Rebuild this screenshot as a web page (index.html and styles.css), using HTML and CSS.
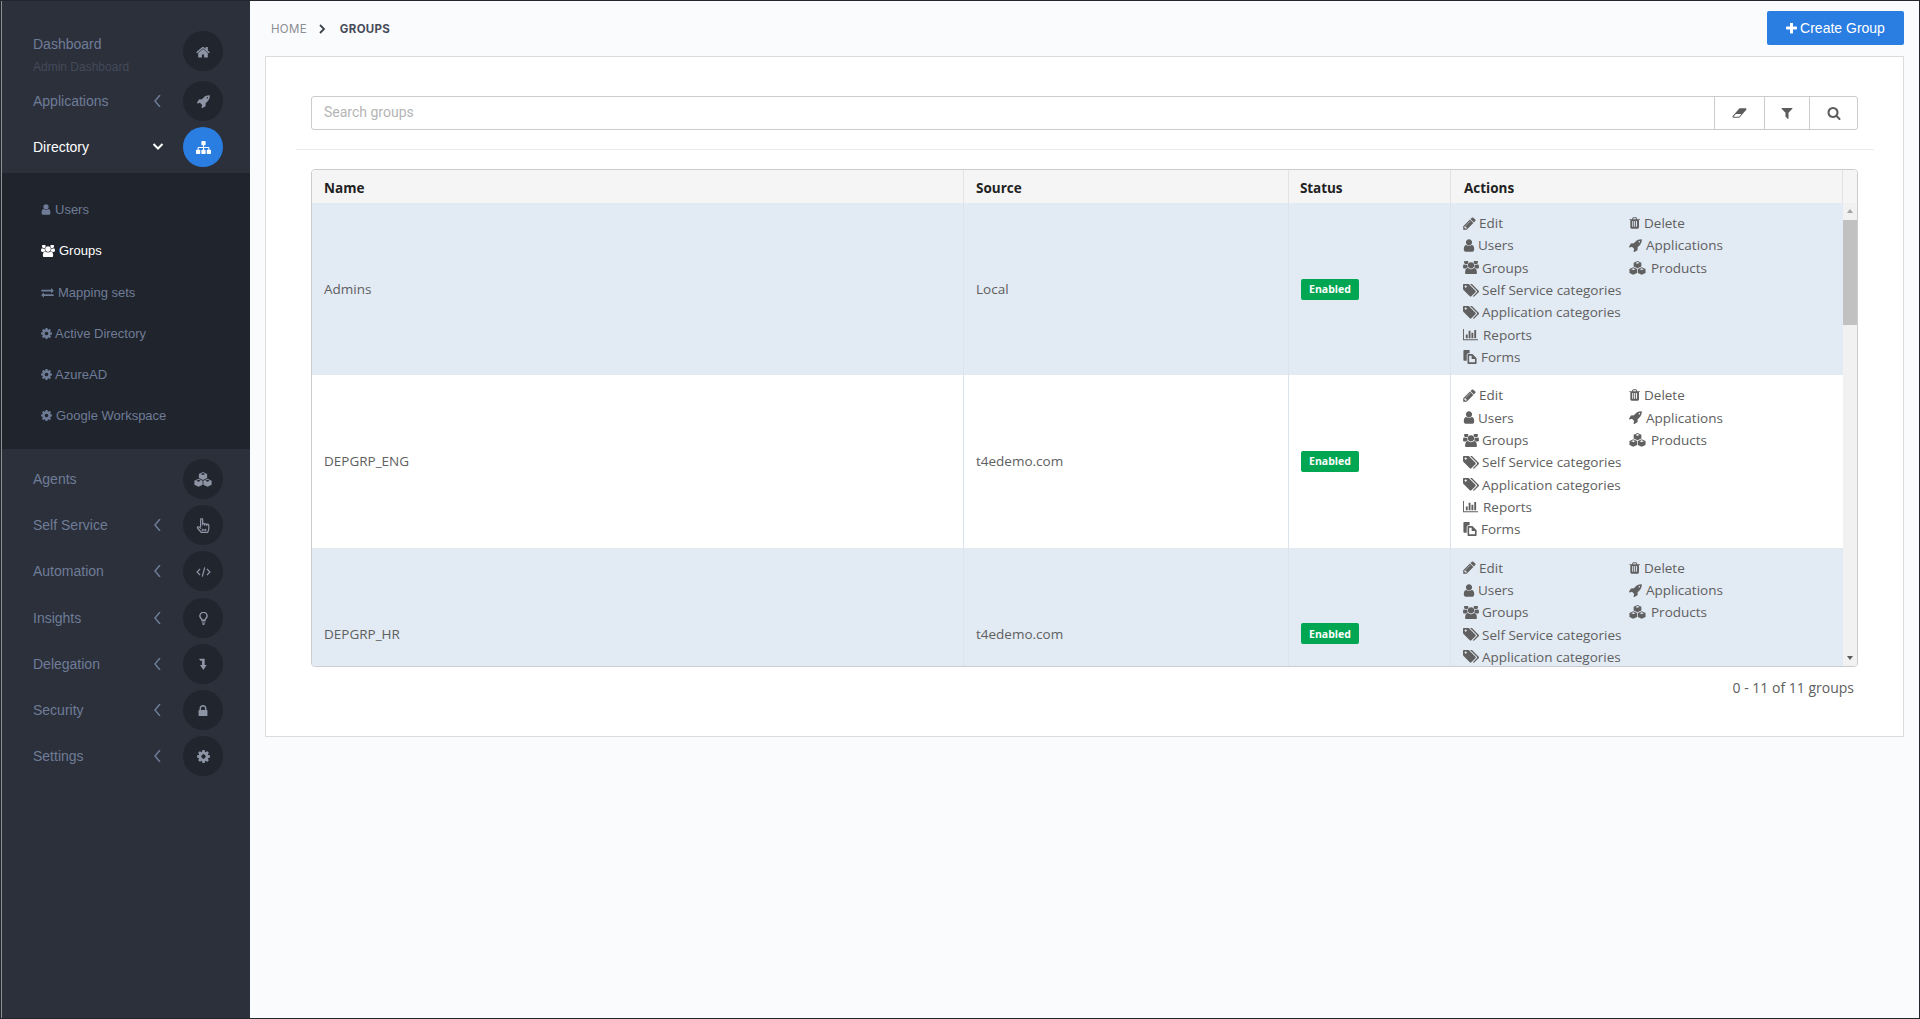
FILE: index.html
```html
<!DOCTYPE html>
<html lang="en">
<head>
<meta charset="utf-8">
<title>Groups</title>
<link rel="stylesheet" href="styles.css">
</head>
<body>
<svg class="defs" aria-hidden="true">
  <symbol id="i-home" viewBox="60 190 1672 1350"><path d="M1472 992v480q0 26-19 45t-45 19h-384v-384h-256v384h-384q-26 0-45-19t-19-45v-480q0-1 .5-3t.5-3l575-474 575 474q1 2 1 6zm223-69l-62 74q-8 9-21 11h-3q-13 0-21-7l-692-577-692 577q-12 8-24 7-13-2-21-11l-62-74q-8-10-7-23.5t11-21.5l719-599q32-26 76-26t76 26l244 204v-195q0-14 9-23t23-9h192q14 0 23 9t9 23v408l219 182q10 8 11 21.5t-7 23.5z"/></symbol>
  <symbol id="i-user" viewBox="200 100 1392 1600"><path d="M1536 1399q0 109-62.5 187t-150.5 78h-854q-88 0-150.5-78t-62.5-187q0-85 8.5-160.5t31.5-152 58.5-131 94-89 134.5-34.5q131 128 313 128t313-128q76 0 134.5 34.5t94 89 58.5 131 31.5 152 8.5 160.5zm-256-887q0 159-112.5 271.5t-271.5 112.5-271.5-112.5-112.5-271.5 112.5-271.5 271.5-112.5 271.5 112.5 112.5 271.5z"/></symbol>
  <symbol id="i-search" viewBox="0 0 1792 1792"><path d="M1216 832q0-185-131.5-316.5t-316.5-131.5-316.5 131.5-131.5 316.5 131.5 316.5 316.5 131.5 316.5-131.5 131.5-316.5zm512 832q0 52-38 90t-90 38q-54 0-90-38l-343-342q-179 124-399 124-143 0-273.5-55.5t-225-150-150-225-55.5-273.5 55.5-273.5 150-225 225-150 273.5-55.5 273.5 55.5 225 150 150 225 55.5 273.5q0 220-124 399l343 343q37 37 37 90z"/></symbol>
  <symbol id="i-filter" viewBox="0 0 1792 1792"><path d="M1595 295q17 41-14 70l-493 493v742q0 42-39 59-13 5-25 5-27 0-45-19l-256-256q-19-19-19-45v-486l-493-493q-31-29-14-70 17-39 59-39h1280q42 0 59 39z"/></symbol>
  <symbol id="i-lock" viewBox="250 130 1292 1410"><path d="M640 768h512v-192q0-106-75-181t-181-75-181 75-75 181v192zm832 96v576q0 40-28 68t-68 28h-960q-40 0-68-28t-28-68v-576q0-40 28-68t68-28h32v-192q0-184 132-316t316-132 316 132 132 316v192h32q40 0 68 28t28 68z"/></symbol>
  <symbol id="i-cog" viewBox="120 120 1552 1552"><path d="M1152 896q0-106-75-181t-181-75-181 75-75 181 75 181 181 75 181-75 75-181zm512-109v222q0 12-8 23t-20 13l-185 28q-19 54-39 91 35 50 107 138 10 12 10 25t-9 23q-27 37-99 108t-94 71q-12 0-26-9l-138-108q-44 23-91 38-16 136-29 186-7 28-36 28h-222q-14 0-24.5-8.5t-11.5-21.5l-28-184q-49-16-90-37l-141 107q-10 9-25 9-14 0-25-11-126-114-165-168-7-10-7-23 0-12 8-23 15-21 51-66.5t54-70.5q-27-50-41-99l-183-27q-13-2-21-12.5t-8-23.5v-222q0-12 8-23t19-13l186-28q14-46 39-92-40-57-107-138-10-12-10-24 0-10 9-23 26-36 98.5-107.5t94.5-71.5q13 0 26 10l138 107q44-23 91-38 16-136 29-186 7-28 36-28h222q14 0 24.5 8.5t11.5 21.5l28 184q49 16 90 37l142-107q9-9 24-9 13 0 25 10 129 119 165 170 7 8 7 22 0 12-8 23-15 21-51 66.5t-54 70.5q26 50 41 98l183 28q13 2 21 12.5t8 23.5z"/></symbol>
  <symbol id="i-plus" viewBox="190 190 1410 1410"><path d="M1600 736v192q0 40-28 68t-68 28h-416v416q0 40-28 68t-68 28h-192q-40 0-68-28t-28-68v-416h-416q-40 0-68-28t-28-68v-192q0-40 28-68t68-28h416v-416q0-40 28-68t68-28h192q40 0 68 28t28 68v416h416q40 0 68 28t28 68z"/></symbol>
  <symbol id="i-pencil" viewBox="100 100 1600 1600"><path d="M491 1536l91-91-235-235-91 91v107h128v128h107zm523-928q0-22-22-22-10 0-17 7l-542 542q-7 7-7 17 0 22 22 22 10 0 17-7l542-542q7-7 7-17zm-54-192l416 416-832 832h-416v-416zm683 96q0 53-37 90l-166 166-416-416 166-165q36-38 90-38 53 0 91 38l235 234q37 39 37 91z"/></symbol>
  <symbol id="i-trash" viewBox="150 100 1450 1600"><path d="M704 1376v-704q0-14-9-23t-23-9h-64q-14 0-23 9t-9 23v704q0 14 9 23t23 9h64q14 0 23-9t9-23zm256 0v-704q0-14-9-23t-23-9h-64q-14 0-23 9t-9 23v704q0 14 9 23t23 9h64q14 0 23-9t9-23zm256 0v-704q0-14-9-23t-23-9h-64q-14 0-23 9t-9 23v704q0 14 9 23t23 9h64q14 0 23-9t9-23zm-544-992h448l-48-117q-7-9-17-11h-317q-10 2-17 11zm928 32v64q0 14-9 23t-23 9h-96v948q0 83-47 143.5t-113 60.5h-832q-66 0-113-58.5t-47-141.5v-952h-96q-14 0-23-9t-9-23v-64q0-14 9-23t23-9h309l70-167q15-37 54-63t79-26h320q40 0 79 26t54 63l70 167h309q14 0 23 9t9 23z"/></symbol>
  <symbol id="i-rocket" viewBox="100 100 1650 1650"><path d="M1504 448q0-40-28-68t-68-28-68 28-28 68 28 68 68 28 68-28 28-68zm224-288q0 249-75.5 430.5t-253.5 360.5q-81 80-195 176l-20 379q-2 16-16 26l-384 224q-7 4-16 4-12 0-23-9l-64-64q-13-14-8-32l85-276-281-281-276 85q-3 1-9 1-14 0-23-9l-64-64q-17-19-5-39l224-384q10-14 26-16l379-20q96-114 176-195 188-187 358-258t431-71q14 0 23.5 9t9.5 22z"/></symbol>
  <symbol id="i-users" viewBox="0 150 1920 1500"><path d="M593 896q-162 5-265 128h-134q-82 0-138-40.5t-56-118.5q0-353 124-353 6 0 43.5 21t97.5 42.5 119 21.5q67 0 133-23-5 37-5 66 0 139 81 256zm1071 637q0 120-73 189.5t-194 69.5h-874q-121 0-194-69.5t-73-189.5q0-53 3.5-103.5t14-109 26.5-108.5 43-97.5 62-81 85.5-53.5 111.5-20q10 0 43 21.5t73 48 107 48 135 21.5 135-21.5 107-48 73-48 43-21.5q61 0 111.5 20t85.5 53.5 62 81 43 97.5 26.5 108.5 14 109 3.5 103.5zm-1024-1277q0 106-75 181t-181 75-181-75-75-181 75-181 181-75 181 75 75 181zm704 384q0 159-112.5 271.5t-271.5 112.5-271.5-112.5-112.5-271.5 112.5-271.5 271.5-112.5 271.5 112.5 112.5 271.5zm576 225q0 78-56 118.5t-138 40.5h-134q-103-123-265-128 81-117 81-256 0-29-5-66 66 23 133 23 59 0 119-21.5t97.5-42.5 43.5-21q124 0 124 353zm-128-609q0 106-75 181t-181 75-181-75-75-181 75-181 181-75 181 75 75 181z"/></symbol>
  <symbol id="i-exchange" viewBox="0 100 1792 1592"><path d="M1792 1184v192q0 13-9.5 22.5t-22.5 9.5h-1376v192q0 13-9.5 22.5t-22.5 9.5q-12 0-24-10l-319-320q-9-9-9-22 0-14 9-23l320-320q9-9 23-9 13 0 22.5 9.5t9.5 22.5v192h1376q13 0 22.5 9.5t9.5 22.5zm0-544q0 14-9 23l-320 320q-9 9-23 9-13 0-22.5-9.5t-9.5-22.5v-192h-1376q-13 0-22.5-9.5t-9.5-22.5v-192q0-13 9.5-22.5t22.5-9.5h1376v-192q0-14 9-23t23-9q12 0 24 10l319 319q9 9 9 23z"/></symbol>
  <symbol id="i-sitemap" viewBox="0 128 1792 1536"><path d="M1792 1248v320q0 40-28 68t-68 28h-320q-40 0-68-28t-28-68v-320q0-40 28-68t68-28h96v-192h-512v192h96q40 0 68 28t28 68v320q0 40-28 68t-68 28h-320q-40 0-68-28t-28-68v-320q0-40 28-68t68-28h96v-192h-512v192h96q40 0 68 28t28 68v320q0 40-28 68t-68 28h-320q-40 0-68-28t-28-68v-320q0-40 28-68t68-28h96v-192q0-52 38-90t90-38h512v-192h-96q-40 0-68-28t-28-68v-320q0-40 28-68t68-28h320q40 0 68 28t28 68v320q0 40-28 68t-68 28h-96v192h512q52 0 90 38t38 90v192h96q40 0 68 28t28 68z"/></symbol>
  <symbol id="i-tags" viewBox="0 190 1900 1450"><path d="M448 448q0-53-37.5-90.5t-90.5-37.5-90.5 37.5-37.5 90.5 37.5 90.5 90.5 37.5 90.5-37.5 37.5-90.5zm1067 576q0 53-37 90l-491 492q-39 37-91 37-53 0-90-37l-715-716q-38-37-64.5-101t-26.5-117v-416q0-52 38-90t90-38h416q53 0 117 26.5t102 64.5l715 714q37 39 37 91zm384 0q0 53-37 90l-491 492q-39 37-91 37-36 0-59-14t-53-45l470-470q37-37 37-90 0-52-37-91l-715-714q-38-38-102-64.5t-117-26.5h224q53 0 117 26.5t102 64.5l715 714q37 39 37 91z"/></symbol>
  <symbol id="i-chart" viewBox="0 240 2048 1424"><path d="M640 896v512h-256v-512h256zm384-512v1024h-256v-1024h256zm1024 1152v128h-2048v-1536h128v1408h1920zm-640-896v768h-256v-768h256zm384-384v1152h-256v-1152h256z"/></symbol>
  <symbol id="i-eraser" viewBox="0 250 2048 1300"><path d="M960 1408l336-384h-768l-336 384h768zm1013-1077q15 34 9.5 71.5t-30.5 65.5l-896 1024q-38 44-96 44h-768q-38 0-69.5-20.5t-47.5-54.5q-15-34-9.5-71.5t30.5-65.5l896-1024q38-44 96-44h768q38 0 69.5 20.5t47.5 54.5z"/></symbol>
  <symbol id="i-files" viewBox="0 0 16 17"><path d="M1 0h6.500v4H6a2 2 0 0 0-2 2v7H1a1 1 0 0 1-1-1V1a1 1 0 0 1 1-1z"/><path fill-rule="evenodd" d="M6 5h5l5 5v6a1 1 0 0 1-1 1H6a1 1 0 0 1-1-1V6a1 1 0 0 1 1-1zm1 2v8h7v-4h-4V7z"/></symbol>
  <symbol id="i-cubes" viewBox="0 0 24 20"><path fill-rule="evenodd" d="M12 0l5.500 2.500V8L12 10.500 6.500 8V2.500zM12 1.400L9 2.700l3 1.300 3-1.300z"/><path fill-rule="evenodd" d="M6 9l5.500 2.500V17L6 19.500.5 17v-5.500zM6 10.400L3 11.700 6 13l3-1.300z"/><path fill-rule="evenodd" d="M18 9l5.500 2.500V17L18 19.500 12.500 17v-5.500zM18 10.400l-3 1.300 3 1.300 3-1.300z"/></symbol>
  <symbol id="i-hand" viewBox="0 0 20 22"><path fill="none" stroke="currentColor" stroke-width="1.800" stroke-linecap="round" stroke-linejoin="round" d="M6.500 12.500V2.500a1.500 1.500 0 0 1 3 0V10M9.500 9.500a1.500 1.500 0 0 1 3 0v1M12.500 10a1.500 1.500 0 0 1 3 0v1M15.500 10.500a1.500 1.500 0 0 1 3 0v5c0 2-.5 3-1.500 5v.5H7v-.5c-1.500-1.500-3.500-3.500-5-5.500-1-1.500.8-3 2.200-1.800L6.500 15M9 16.500v2M11.500 16.500v2M14 16.500v2"/></symbol>
  <symbol id="i-code" viewBox="0 0 24 16"><path fill="none" stroke="currentColor" stroke-width="2" d="M6.500 3L1.800 8l4.700 5M17.500 3l4.700 5-4.700 5M14 .5L10 15.500"/></symbol>
  <symbol id="i-bulb" viewBox="0 0 12 18"><path fill="none" stroke="currentColor" stroke-width="2" d="M4 11.500c0-2-3-3-3-6a5 5 0 0 1 10 0c0 3-3 4-3 6z"/><path d="M3.500 13h5v1.500h-5zM4 15.500h4L7 18H5z"/></symbol>
  <symbol id="i-level" viewBox="0 0 12 18"><path d="M0 1h8.500v9.500H11.500L6.500 18 1.500 10.500H4.500V4H2z"/></symbol>
</svg>

<div class="shell">
  <nav class="sidebar">
    <a class="item item-first"><span class="label"><span>Dashboard</span><small class="sub-label">Admin Dashboard</small></span><span class="circle"><svg class="c-ico ci-home"><use href="#i-home"/></svg></span></a>
    <a class="item"><span class="label">Applications</span><svg class="chev"><polyline points="8,0 3,6 8,12"/></svg><span class="circle"><svg class="c-ico"><use href="#i-rocket"/></svg></span></a>
    <a class="item item-active"><span class="label">Directory</span><svg class="chev"><polyline points="1.500,3 6,7.500 10.500,3"/></svg><span class="circle"><svg class="c-ico ci-site"><use href="#i-sitemap"/></svg></span></a>
    <ul class="submenu">
      <li class="sub-item"><svg class="s-ico s-user"><use href="#i-user"/></svg>Users</li>
      <li class="sub-item sub-active"><svg class="s-ico s-users"><use href="#i-users"/></svg>Groups</li>
      <li class="sub-item"><svg class="s-ico s-map"><use href="#i-exchange"/></svg>Mapping sets</li>
      <li class="sub-item"><svg class="s-ico s-cog"><use href="#i-cog"/></svg>Active Directory</li>
      <li class="sub-item"><svg class="s-ico s-cog"><use href="#i-cog"/></svg>AzureAD</li>
      <li class="sub-item"><svg class="s-ico s-cog s-gap"><use href="#i-cog"/></svg>Google Workspace</li>
    </ul>
    <a class="item"><span class="label">Agents</span><span class="circle"><svg class="c-ico ci-cubes"><use href="#i-cubes"/></svg></span></a>
    <a class="item"><span class="label">Self Service</span><svg class="chev"><polyline points="8,0 3,6 8,12"/></svg><span class="circle"><svg class="c-ico ci-hand"><use href="#i-hand"/></svg></span></a>
    <a class="item"><span class="label">Automation</span><svg class="chev"><polyline points="8,0 3,6 8,12"/></svg><span class="circle"><svg class="c-ico ci-code"><use href="#i-code"/></svg></span></a>
    <a class="item"><span class="label">Insights</span><svg class="chev"><polyline points="8,0 3,6 8,12"/></svg><span class="circle"><svg class="c-ico ci-bulb"><use href="#i-bulb"/></svg></span></a>
    <a class="item"><span class="label">Delegation</span><svg class="chev"><polyline points="8,0 3,6 8,12"/></svg><span class="circle"><svg class="c-ico ci-level"><use href="#i-level"/></svg></span></a>
    <a class="item"><span class="label">Security</span><svg class="chev"><polyline points="8,0 3,6 8,12"/></svg><span class="circle"><svg class="c-ico ci-lock"><use href="#i-lock"/></svg></span></a>
    <a class="item"><span class="label">Settings</span><svg class="chev"><polyline points="8,0 3,6 8,12"/></svg><span class="circle"><svg class="c-ico"><use href="#i-cog"/></svg></span></a>
  </nav>

  <main class="main">
    <header class="topbar">
      <div class="crumbs"><span class="crumb-home">HOME</span><svg class="crumb-sep"><polyline points="1,1 5,5 1,9"/></svg><span class="crumb-now">GROUPS</span></div>
      <button class="btn-create"><svg class="plus"><use href="#i-plus"/></svg>Create Group</button>
    </header>

    <section class="card">
      <div class="search">
        <div class="search-input">Search groups</div>
        <div class="search-btn b-erase"><svg class="sb-erase"><use href="#i-eraser"/></svg></div>
        <div class="search-btn b-filter"><svg class="sb-ico"><use href="#i-filter"/></svg></div>
        <div class="search-btn b-search"><svg class="sb-ico"><use href="#i-search"/></svg></div>
      </div>
      <hr class="rule">
      <div class="table">
        <div class="thead">
          <div class="th">Name</div><div class="th">Source</div><div class="th th-status">Status</div><div class="th th-actions">Actions</div><div class="th th-end"></div>
        </div>
        <div class="tbody-wrap">
          <div class="tbody">
            <div class="row row-alt">
              <div class="td">Admins</div><div class="td">Local</div><div class="td td-status"><span class="badge">Enabled</span></div>
              <div class="td td-actions">
                <div class="act-col act-left">
                  <a class="act"><svg class="i a-edit"><use href="#i-pencil"/></svg>Edit</a>
                  <a class="act"><svg class="i a-user"><use href="#i-user"/></svg>Users</a>
                  <a class="act"><svg class="i a-wide"><use href="#i-users"/></svg>Groups</a>
                  <a class="act"><svg class="i a-wide"><use href="#i-tags"/></svg>Self Service categories</a>
                  <a class="act"><svg class="i a-wide"><use href="#i-tags"/></svg>Application categories</a>
                  <a class="act"><svg class="i a-chart"><use href="#i-chart"/></svg>Reports</a>
                  <a class="act"><svg class="i a-files"><use href="#i-files"/></svg>Forms</a>
                </div>
                <div class="act-col">
                  <a class="act"><svg class="i a-trash"><use href="#i-trash"/></svg>Delete</a>
                  <a class="act"><svg class="i a-rocket"><use href="#i-rocket"/></svg>Applications</a>
                  <a class="act"><svg class="i a-cubes"><use href="#i-cubes"/></svg>Products</a>
                </div>
              </div>
            </div>
            <div class="row">
              <div class="td">DEPGRP_ENG</div><div class="td">t4edemo.com</div><div class="td td-status"><span class="badge">Enabled</span></div>
              <div class="td td-actions">
                <div class="act-col act-left">
                  <a class="act"><svg class="i a-edit"><use href="#i-pencil"/></svg>Edit</a>
                  <a class="act"><svg class="i a-user"><use href="#i-user"/></svg>Users</a>
                  <a class="act"><svg class="i a-wide"><use href="#i-users"/></svg>Groups</a>
                  <a class="act"><svg class="i a-wide"><use href="#i-tags"/></svg>Self Service categories</a>
                  <a class="act"><svg class="i a-wide"><use href="#i-tags"/></svg>Application categories</a>
                  <a class="act"><svg class="i a-chart"><use href="#i-chart"/></svg>Reports</a>
                  <a class="act"><svg class="i a-files"><use href="#i-files"/></svg>Forms</a>
                </div>
                <div class="act-col">
                  <a class="act"><svg class="i a-trash"><use href="#i-trash"/></svg>Delete</a>
                  <a class="act"><svg class="i a-rocket"><use href="#i-rocket"/></svg>Applications</a>
                  <a class="act"><svg class="i a-cubes"><use href="#i-cubes"/></svg>Products</a>
                </div>
              </div>
            </div>
            <div class="row row-alt">
              <div class="td">DEPGRP_HR</div><div class="td">t4edemo.com</div><div class="td td-status"><span class="badge">Enabled</span></div>
              <div class="td td-actions">
                <div class="act-col act-left">
                  <a class="act"><svg class="i a-edit"><use href="#i-pencil"/></svg>Edit</a>
                  <a class="act"><svg class="i a-user"><use href="#i-user"/></svg>Users</a>
                  <a class="act"><svg class="i a-wide"><use href="#i-users"/></svg>Groups</a>
                  <a class="act"><svg class="i a-wide"><use href="#i-tags"/></svg>Self Service categories</a>
                  <a class="act"><svg class="i a-wide"><use href="#i-tags"/></svg>Application categories</a>
                  <a class="act"><svg class="i a-chart"><use href="#i-chart"/></svg>Reports</a>
                  <a class="act"><svg class="i a-files"><use href="#i-files"/></svg>Forms</a>
                </div>
                <div class="act-col">
                  <a class="act"><svg class="i a-trash"><use href="#i-trash"/></svg>Delete</a>
                  <a class="act"><svg class="i a-rocket"><use href="#i-rocket"/></svg>Applications</a>
                  <a class="act"><svg class="i a-cubes"><use href="#i-cubes"/></svg>Products</a>
                </div>
              </div>
            </div>
          </div>
          <div class="scrollbar">
            <svg class="arrow"><polygon points="1,5 4,1 7,5"/></svg>
            <div class="track"><div class="thumb"></div></div>
            <svg class="arrow"><polygon points="1,1 7,1 4,5"/></svg>
          </div>
        </div>
      </div>
      <div class="count">0 - 11 of 11 groups</div>
    </section>
  </main>
</div>
</body>
</html>
```

FILE: styles.css
```css
* { box-sizing: border-box; }
html, body { margin: 0; padding: 0; height: 100%; }
body { overflow: hidden; background: #fafbfd; }
.defs { display: none; }
svg { fill: currentColor; flex: none; }

.shell {
  display: flex;
  width: 1920px;
  height: 1019px;
  border: 1px solid #23262c;
  overflow: hidden;
}

/* Sidebar */
.sidebar {
  width: 249px;
  flex: none;
  background: #2b303b;
  border-left: 1px solid #8b8f96;
  padding-top: 30px;
  font-family: "Liberation Sans", Arial, sans-serif;
  color: #6f7c97;
}
.item {
  display: flex;
  align-items: center;
  height: 40px;
  margin-bottom: 6.150px;
  padding-left: 31px;
  font-size: 14px;
}
.item-first { margin-bottom: 10px; }
.label { flex: 1; display: flex; flex-direction: column; }
.sub-label { font-size: 12px; color: #434a59; margin-top: 8px; margin-bottom: -10px; }
.item-first .label { margin-top: -2px; }
.chev {
  width: 12px; height: 12px;
  margin-right: 19px;
  fill: none; stroke: currentColor; stroke-width: 1.500;
}
.circle {
  width: 40px; height: 40px;
  margin-right: 27px;
  border-radius: 50%;
  background: #21252d;
  display: flex; align-items: center; justify-content: center;
  color: #8d95a5;
  flex: none;
  padding-top: 1px;
}
.c-ico { width: 13px; height: 13px; }
.ci-home { width: 14px; height: 12px; }
.ci-site { width: 15px; height: 13px; }
.ci-cubes { width: 18px; height: 15px; }
.ci-hand { width: 14px; height: 15px; }
.ci-code { width: 15px; height: 10px; }
.ci-bulb { width: 9px; height: 13px; }
.ci-level { width: 8px; height: 12px; }
.ci-lock { width: 10px; height: 11px; }
.item-active { color: #fff; margin-bottom: 6px; }
.item-active .circle { background: #2a7de1; color: #fff; }
.item-active .chev { stroke-width: 2; }

.submenu {
  list-style: none;
  margin: 0 0 10px;
  padding: 16px 0 12px 39px;
  background: #20242c;
  font-size: 13px;
  height: 276px;
}
.sub-item { height: 41.200px; display: flex; align-items: center; margin: 0; }
.sub-active { color: #fff; }
.s-ico { height: 11px; margin-right: 3px; }
.s-user { width: 10px; margin-right: 4px; }
.s-users { width: 14px; height: 12px; margin-right: 4px; }
.s-map { width: 13px; margin-right: 4px; }
.s-cog { width: 11px; height: 11px; }
.s-gap { margin-right: 4px; }

/* Main */
.main { flex: 1; display: flex; flex-direction: column; min-width: 0; }
.topbar {
  height: 55px;
  flex: none;
  display: flex;
  align-items: center;
  justify-content: space-between;
  padding: 0 15px 1px 21px;
}
.crumbs { display: flex; align-items: center; padding-top: 1px; font-family: Inter, "Noto Sans", sans-serif; font-size: 11.500px; letter-spacing: .3px; }
.crumb-home { color: #8a8d92; }
.crumb-sep { width: 7px; height: 10px; margin: 0 14px 0 12px; fill: none; stroke: #3c424d; stroke-width: 1.800; }
.crumb-now { color: #464c59; font-weight: 700; }
.btn-create {
  width: 137px; height: 34px;
  border: 0; border-radius: 2px;
  background: #2a7de1;
  color: #fff;
  font: 14px "Liberation Sans", Arial, sans-serif;
  display: flex; align-items: center; justify-content: center;
  padding: 0;
}
.plus { width: 11px; height: 11px; margin-right: 3px; }

.card {
  width: 1639px;
  margin-left: 15px;
  height: 681px;
  flex: none;
  background: #fff;
  border: 1px solid #dcdcdc;
  padding: 39px 45px 0;
  font-family: "Open Sans", sans-serif;
  color: #606060;
}
.search {
  display: flex;
  height: 34px;
  border: 1px solid #ccc;
  border-radius: 3px;
  color: #5c5c5c;
}
.search-input {
  flex: 1;
  padding-left: 12px;
  font: 14px/31px Roboto, sans-serif;
  color: #b5b5b5;
}
.search-btn { display: flex; align-items: center; justify-content: center; border-left: 1px solid #ccc; }
.b-erase { width: 50px; }
.b-filter { width: 45px; }
.b-search { width: 48px; }
.sb-ico { width: 14px; height: 14px; }
.sb-erase { width: 15px; height: 10px; }
.rule { border: 0; border-top: 1px solid #eaeaea; margin: 19px -16px 19px -15px; }

.table {
  height: 498px;
  border: 1px solid #ccc;
  border-radius: 4px;
  overflow: hidden;
  display: flex;
  flex-direction: column;
}
.thead {
  display: grid;
  grid-template-columns: 651px 325px 162px 392px 1fr;
  height: 33px;
  flex: none;
  background: #f5f5f5;
}
.th {
  font-weight: 700;
  font-size: 13.500px;
  line-height: 36px;
  color: #222;
  padding-left: 12px;
  border-left: 1px solid #e3e3e3;
}
.th:first-child { border-left: 0; }
.th-status { padding-left: 11px; letter-spacing: -.1px; }
.th-actions { padding-left: 13px; }
.tbody-wrap { flex: 1; display: flex; min-height: 0; }
.tbody { flex: 1; overflow: hidden; min-width: 0; }
.row {
  display: grid;
  grid-template-columns: 651px 325px 162px 1fr;
  height: 172.300px;
  font-size: 13.500px;
}
.row-alt { background: #e2eaf4; }
.td {
  display: flex;
  align-items: center;
  padding-left: 12px;
  border-left: 1px solid #dde3ea;
}
.td:first-child { border-left: 0; }
.badge {
  width: 58px; height: 21px;
  background: #00a651;
  color: #fff;
  font-size: 10.500px;
  font-weight: 700;
  border-radius: 2px;
  display: flex; align-items: center; justify-content: center;
}
.td-actions { align-items: flex-start; padding-top: 9px; }
.act-col { display: flex; flex-direction: column; }
.act-left { width: 166px; }
.act { display: flex; align-items: center; height: 22.300px; white-space: nowrap; }
.i { margin-right: 3px; }
.a-edit { width: 13px; height: 13px; }
.a-user { width: 12px; height: 13px; }
.a-wide { width: 16px; height: 13px; }
.a-chart { width: 15px; height: 12px; margin-right: 5px; }
.a-files { width: 14px; height: 14px; margin-right: 4px; }
.a-trash { width: 11px; height: 12px; margin-right: 4px; }
.a-rocket { width: 13px; height: 13px; margin-right: 4px; }
.a-cubes { width: 17px; height: 14px; margin-right: 5px; }

.scrollbar {
  width: 14px;
  flex: none;
  background: #f1f1f1;
  display: flex;
  flex-direction: column;
  align-items: center;
  color: #5a5a5a;
}
.arrow { width: 8px; height: 6px; margin: 5px 0; flex: none; }
.scrollbar .arrow:first-child { color: #a3a3a3; }
.track { flex: 1; width: 100%; }
.thumb { height: 105px; background: #c1c1c1; margin-top: 1px; }

.count {
  text-align: right;
  font-size: 14px;
  line-height: 18px;
  margin-top: 12px;
  padding-right: 4px;
}
```
